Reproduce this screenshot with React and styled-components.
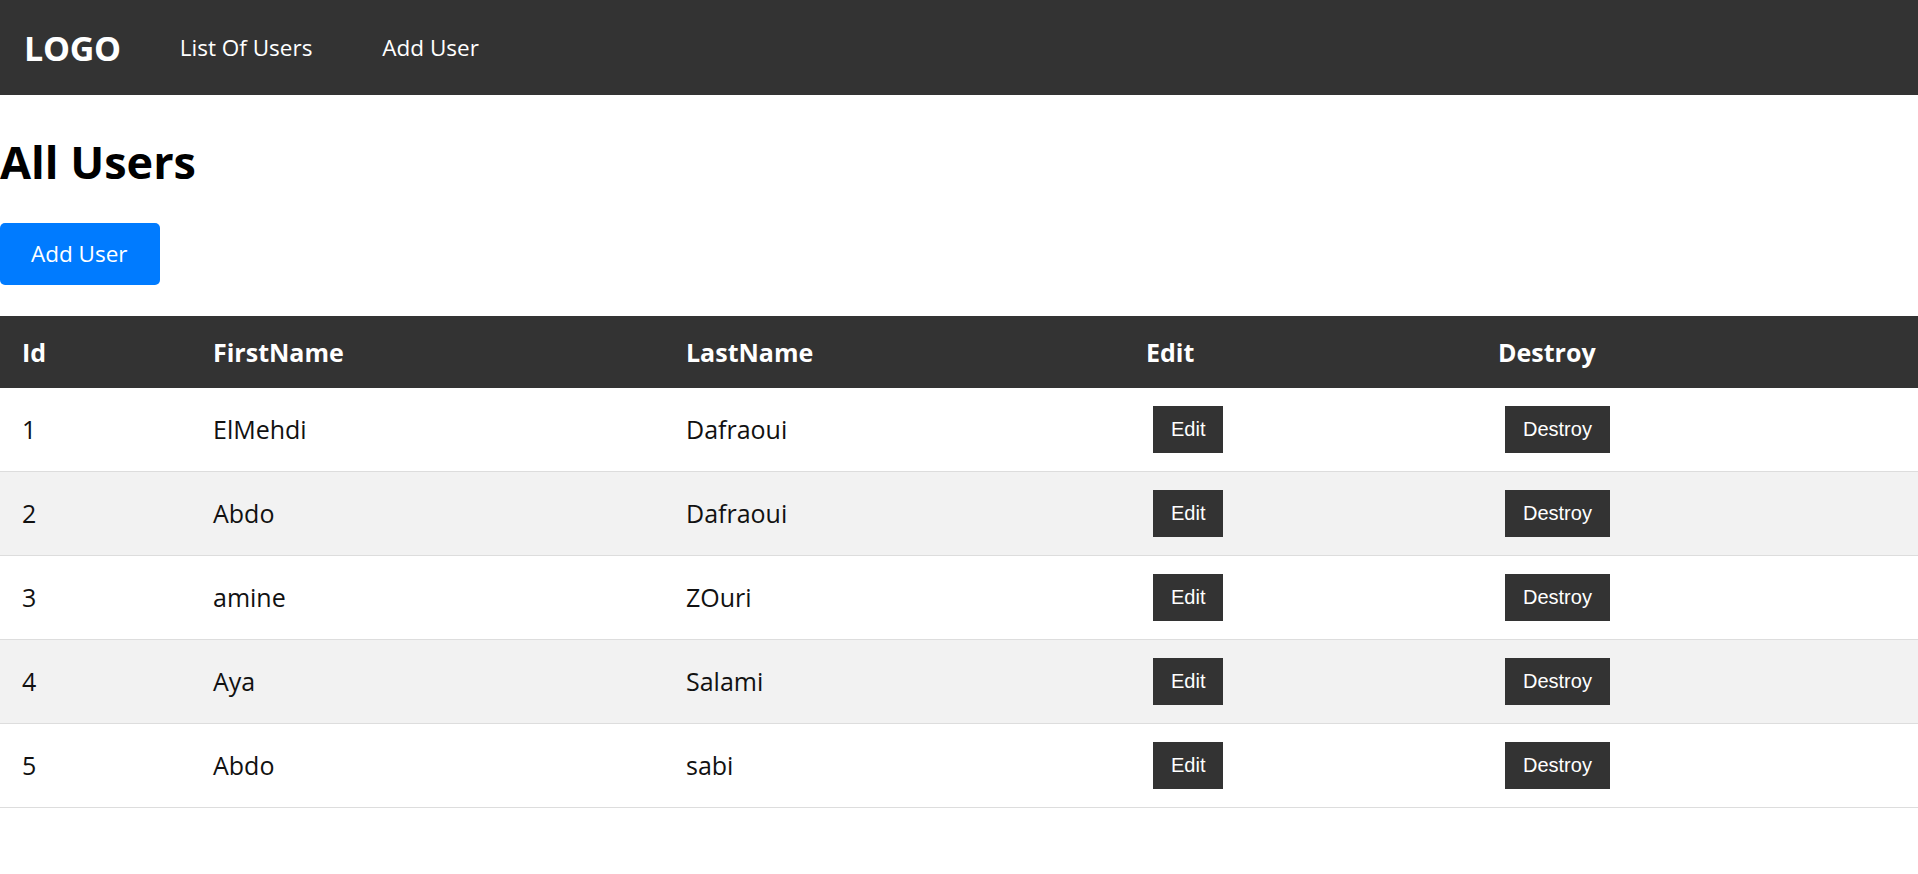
import React from "react";
import styled, { createGlobalStyle } from "styled-components";

const GlobalStyle = createGlobalStyle`
  html, body {
    margin: 0;
    padding: 0;
    background: #ffffff;
    font-family: "Segoe UI", "Open Sans", "Noto Sans", sans-serif;
    color: #000;
  }
  * { box-sizing: border-box; }
`;

const NavBar = styled.nav`
  height: 95px;
  background: #333333;
  display: flex;
  align-items: center;
  padding-left: 24px;
`;

const Logo = styled.a`
  color: #ffffff;
  font-weight: 700;
  font-size: 34px;
  text-decoration: none;
  margin-right: 24px;
  letter-spacing: -0.3px;
`;

const NavLink = styled.a`
  color: #ffffff;
  font-size: 22.5px;
  text-decoration: none;
  padding: 0 35px;
`;

const Main = styled.main`
  display: flex;
  flex-direction: column;
  align-items: flex-start;
`;

const Title = styled.h1`
  margin: 40px 0 0;
  font-size: 45px;
  line-height: 54px;
  font-weight: 700;
`;

const PrimaryButton = styled.button`
  margin-top: 34px;
  background: #007bff;
  color: #ffffff;
  border: none;
  border-radius: 5px;
  font-family: inherit;
  font-size: 22.5px;
  line-height: 32px;
  padding: 15px 32px 15px 31px;
  cursor: pointer;
`;

const Table = styled.table`
  margin-top: 31px;
  width: 100%;
  border-collapse: collapse;
  table-layout: fixed;
  font-size: 25px;
`;

const HeadCell = styled.th`
  background: #333333;
  color: #ffffff;
  text-align: left;
  font-weight: 700;
  line-height: 32px;
  padding: 20px 22px;
`;

const Row = styled.tr`
  background: ${(p) => (p.$striped ? "#f2f2f2" : "#ffffff")};
  border-bottom: 1px solid #dddddd;
`;

const Cell = styled.td`
  padding: 18px 22px;
  height: 83px;
  line-height: 47px;
  vertical-align: middle;
  color: #111;
`;

const DarkButton = styled.button`
  display: block;
  margin-left: 7px;
  background: #333333;
  color: #ffffff;
  border: none;
  font-family: "Liberation Sans", Arial, sans-serif;
  font-size: 20px;
  line-height: 23px;
  padding: 12px 18px;
  cursor: pointer;
`;

const users = [
  { id: 1, first: "ElMehdi", last: "Dafraoui" },
  { id: 2, first: "Abdo", last: "Dafraoui" },
  { id: 3, first: "amine", last: "ZOuri" },
  { id: 4, first: "Aya", last: "Salami" },
  { id: 5, first: "Abdo", last: "sabi" },
];

const widths = [191, 473, 460, 352];

export default function App() {
  return (
    <>
      <GlobalStyle />
      <NavBar>
        <Logo href="#">LOGO</Logo>
        <NavLink href="#">List Of Users</NavLink>
        <NavLink href="#">Add User</NavLink>
      </NavBar>
      <Main>
        <Title>All Users</Title>
        <PrimaryButton>Add User</PrimaryButton>
        <Table>
          <colgroup>
            {widths.map((w, i) => (
              <col key={i} style={{ width: w }} />
            ))}
            <col />
          </colgroup>
          <thead>
            <tr>
              <HeadCell>Id</HeadCell>
              <HeadCell>FirstName</HeadCell>
              <HeadCell>LastName</HeadCell>
              <HeadCell>Edit</HeadCell>
              <HeadCell>Destroy</HeadCell>
            </tr>
          </thead>
          <tbody>
            {users.map((u, i) => (
              <Row key={u.id} $striped={i % 2 === 1}>
                <Cell>{u.id}</Cell>
                <Cell>{u.first}</Cell>
                <Cell>{u.last}</Cell>
                <Cell>
                  <DarkButton>Edit</DarkButton>
                </Cell>
                <Cell>
                  <DarkButton>Destroy</DarkButton>
                </Cell>
              </Row>
            ))}
          </tbody>
        </Table>
      </Main>
    </>
  );
}
